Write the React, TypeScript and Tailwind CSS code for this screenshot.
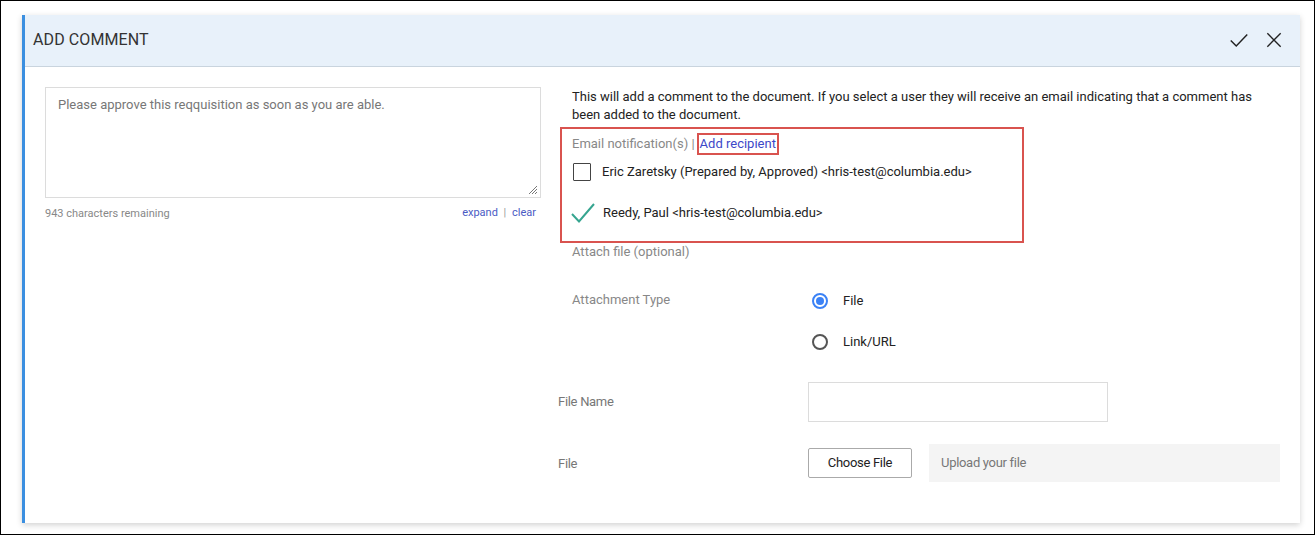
import React from "react";

export default function App() {
  return (
    <div
      className="w-[1315px] h-[535px] border border-black bg-white pl-[21px] pt-[14px] overflow-hidden"
      style={{ fontFamily: "Roboto, 'Noto Sans', Arial, sans-serif" }}
    >
      <div className="w-[1278px] h-[508px] bg-white border-l-[3px] border-[#3b8fe0] shadow-[0_2px_6px_rgba(0,0,0,0.18)] flex flex-col">
        {/* Header */}
        <div className="h-[52px] bg-[#e8f1fa] border-b border-[#c9d4de] flex items-center justify-between pl-[8px] pr-[16px]">
          <div className="text-[16px] text-[#333] tracking-[0.1px] mt-[-2px]">ADD COMMENT</div>
          <div className="flex items-center gap-[14px] text-[#222] mt-[-2px]">
            <svg width="22" height="22" viewBox="0 0 24 24" fill="none" stroke="#222" strokeWidth="1.6">
              <path d="M3 12.5 L9 18.5 L21 6" />
            </svg>
            <svg width="20" height="20" viewBox="0 0 24 24" fill="none" stroke="#222" strokeWidth="1.6">
              <path d="M4 4 L20 20 M20 4 L4 20" />
            </svg>
          </div>
        </div>
        {/* Body */}
        <div className="flex flex-1">
          {/* Left */}
          <div className="w-[533px] pl-[20px] pt-[20px]">
            <div className="relative w-[496px] h-[111px] border border-[#dcdcdc] px-[12px] pt-[7px] text-[13px] text-[#777]">
              Please approve this reqquisition as soon as you are able.
              <svg className="absolute right-[3px] bottom-[3px]" width="8" height="8" viewBox="0 0 8 8" stroke="#555" strokeWidth="0.8">
                <path d="M8 0 L0 8 M8 3 L3 8 M8 6 L6 8" />
              </svg>
            </div>
            <div className="w-[496px] flex justify-between items-center mt-[6px] text-[11px]">
              <span className="text-[#888] mt-[2px]">943 characters remaining</span>
              <span className="text-[#4a5bc4] pr-[5px]">
                expand <span className="text-[#999] px-[3px]">|</span> clear
              </span>
            </div>
          </div>
          {/* Right */}
          <div className="flex-1 pt-[21px]">
            <div className="pl-[14px] pr-[20px] text-[13px] leading-[18px] text-[#222]">
              This will add a comment to the document. If you select a user they will receive an email indicating that a comment has been added to the document.
            </div>
            <div className="ml-[2px] mt-[3px] w-[464px] h-[116px] border-2 border-[#d9534f] pl-[10px] pt-[4px]">
              <div className="flex items-center text-[13px] h-[22px]">
                <span className="text-[#888]">Email notification(s) |</span>
                <span className="ml-[2px] border-2 border-[#d9534f] h-[22px] px-[1px] flex items-center text-[#3d48c8]">
                  Add recipient
                </span>
              </div>
              <div className="flex items-center mt-[8px] h-[18px]">
                <div className="w-[18px] h-[18px] border-[1.5px] border-[#444] rounded-[1px] ml-[1px]" />
                <span className="ml-[11px] text-[13px] text-[#222]">
                  Eric Zaretsky (Prepared by, Approved) &lt;hris-test@columbia.edu&gt;
                </span>
              </div>
              <div className="flex items-center mt-[21px] h-[22px]">
                <svg width="24" height="22" viewBox="0 0 24 22" fill="none" stroke="#36a590" strokeWidth="2" className="ml-[-1px]">
                  <path d="M1 12 L8 19.5 L23 2" />
                </svg>
                <span className="ml-[8px] text-[13px] text-[#222]">Reedy, Paul &lt;hris-test@columbia.edu&gt;</span>
              </div>
            </div>
            <div className="pl-[14px] text-[13px] leading-[18px] text-[#888]">Attach file (optional)</div>
            <div className="flex mt-[30px] pl-[14px] h-[18px] items-center">
              <div className="w-[240px] text-[13px] text-[#888]">Attachment Type</div>
              <div className="flex items-center mt-[2px]">
                <div className="w-[16px] h-[16px] rounded-full border-2 border-[#3b82f6] flex items-center justify-center">
                  <div className="w-[8px] h-[8px] rounded-full bg-[#3b82f6]" />
                </div>
                <span className="ml-[15px] text-[13px] text-[#222]">File</span>
              </div>
            </div>
            <div className="flex mt-[24px] pl-[254px] h-[18px] items-center">
              <div className="w-[16px] h-[16px] rounded-full border-2 border-[#555]" />
              <span className="ml-[15px] text-[13px] text-[#222]">Link/URL</span>
            </div>
            <div className="flex mt-[31px] items-center h-[40px]">
              <div className="w-[250px] text-[13px] text-[#777] tracking-[-0.3px]">File Name</div>
              <div className="w-[300px] h-[40px] border border-[#dcdcdc]" />
            </div>
            <div className="flex mt-[22px] items-center h-[38px]">
              <div className="w-[250px] text-[13px] text-[#777] tracking-[-0.3px] mt-[1px]">File</div>
              <div className="w-[104px] h-[30px] border border-[#aaa] rounded-[2px] flex items-center justify-center text-[13px] text-[#222] tracking-[-0.3px]">
                Choose File
              </div>
              <div className="ml-[17px] w-[351px] h-[38px] bg-[#f4f4f4] flex items-center pl-[12px] text-[13px] text-[#777] tracking-[-0.3px]">
                Upload your file
              </div>
            </div>
          </div>
        </div>
      </div>
    </div>
  );
}
